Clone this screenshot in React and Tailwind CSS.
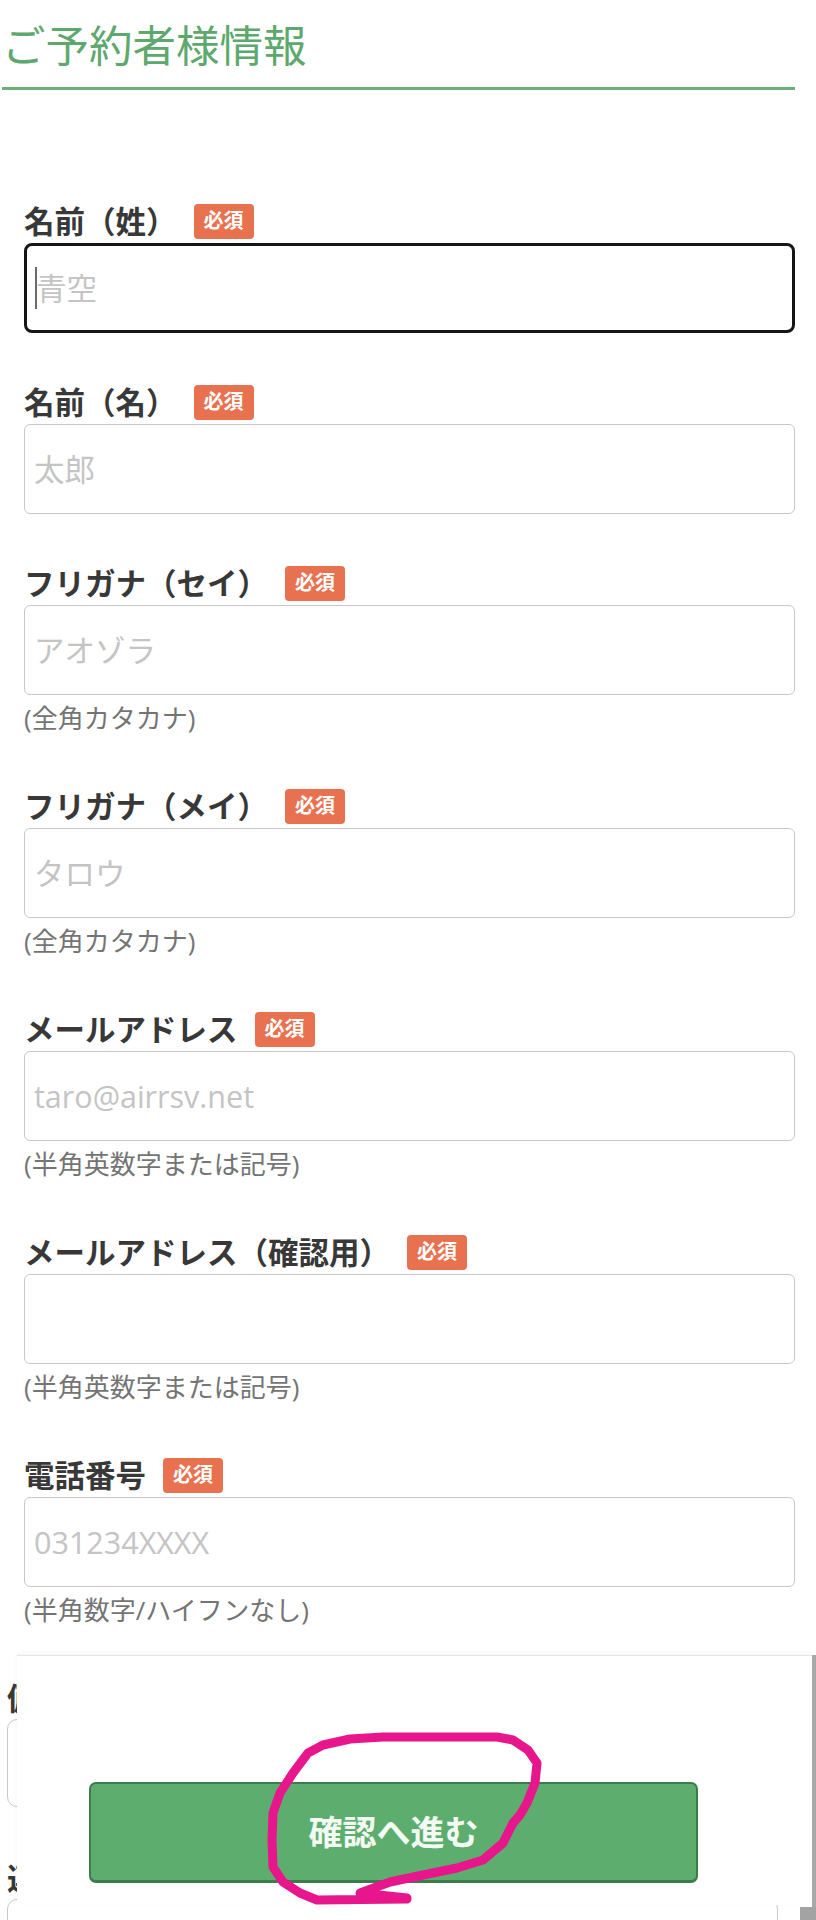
import React from "react";

const FIELDS = [
  { label: "名前（姓）", placeholder: "青空", focused: true },
  { label: "名前（名）", placeholder: "太郎" },
  { label: "フリガナ（セイ）", placeholder: "アオゾラ", help: "(全角カタカナ)" },
  { label: "フリガナ（メイ）", placeholder: "タロウ", help: "(全角カタカナ)" },
  { label: "メールアドレス", placeholder: "taro@airrsv.net", help: "(半角英数字または記号)" },
  { label: "メールアドレス（確認用）", placeholder: "", help: "(半角英数字または記号)" },
  { label: "電話番号", placeholder: "031234XXXX", help: "(半角数字/ハイフンなし)" },
];

// hand-drawn marker loop around the submit label
const LOOP = [
  [407, 1898], [360, 1893], [390, 1882], [423, 1875], [457, 1868], [483, 1860],
  [503, 1843], [513, 1823], [520, 1815], [527, 1803], [535, 1783], [537, 1763],
  [528, 1750], [513, 1740], [497, 1737], [383, 1737], [350, 1739], [323, 1745],
  [308, 1753], [293, 1773], [280, 1793], [273, 1813], [272, 1840], [273, 1867],
  [283, 1882], [300, 1893], [317, 1900], [407, 1899],
];

function Field({ label, placeholder, help, focused }) {
  return (
    <div className={help ? "mb-[50px]" : "mb-[51px]"}>
      <div className="flex h-[36px] items-center">
        <span className="text-[30.5px] font-bold leading-none text-[#383838]">{label}</span>
        <span className="ml-[17px] flex h-[35px] w-[60px] items-center justify-center rounded-[4px] bg-[#e8714f] text-[20px] font-bold leading-none text-white">
          必須
        </span>
      </div>
      <div className="relative mt-[4px]">
        <input
          type="text"
          placeholder={placeholder}
          className={
            focused
              ? "h-[90px] w-full rounded-[8px] border-[3px] border-[#161616] bg-white pl-[9px] text-[30.5px] text-[#333] outline-none placeholder:text-[#c4c4c4]"
              : "h-[90px] w-full rounded-[6px] border border-[#c8c8c8] bg-white pl-[9px] text-[30.5px] text-[#333] outline-none placeholder:text-[#c4c4c4]"
          }
        />
        {focused && <span className="absolute left-[11px] top-[24px] h-[42px] w-[2px] bg-[#6b6b6b]" />}
      </div>
      {help && <p className="h-[43px] pt-[5px] text-[26px] leading-[36px] text-[#747474]">{help}</p>}
    </div>
  );
}

export default function App() {
  const d = LOOP.map(([x, y], i) => `${i ? "L" : "M"}${x} ${y}`).join(" ");

  return (
    <div className="relative h-[1920px] w-[816px] overflow-hidden bg-white font-['Open_Sans','Noto_Sans_CJK_JP',sans-serif]">
      {/* section title */}
      <div className="ml-[2px] w-[793px] border-b-[3px] border-[#68b279] pb-[13px] pt-[17px]">
        <h1 className="text-[43.5px] font-normal leading-[57px] text-[#5da86c]">ご予約者様情報</h1>
      </div>

      <form className="pl-[24px] pr-[21px] pt-[113px]">
        {FIELDS.map((f) => (
          <Field key={f.label} {...f} />
        ))}
      </form>

      {/* rest of the form, hidden under the footer sheet */}
      <div className="ml-[7px] mr-[38px] mt-[8px]">
        <div className="flex h-[36px] items-center">
          <span className="text-[30.5px] font-bold leading-none text-[#383838]">備考</span>
        </div>
        <div className="mt-[3px] h-[88px] rounded-[10px] border border-[#c8c8c8]" />
        <div className="mt-[53px] flex h-[36px] items-center">
          <span className="text-[30.5px] font-bold leading-none text-[#383838]">連絡事項</span>
        </div>
        <div className="mt-[3px] h-[60px] rounded-t-[10px] border border-[#c8c8c8]" />
      </div>

      {/* footer sheet */}
      <div className="absolute left-[17px] top-[1655px] h-[250px] w-[795px] border-t border-[#e6e6e6] bg-white shadow-[0_-2px_6px_rgba(0,0,0,0.04)]">
        <button
          type="button"
          className="ml-[72px] mt-[126px] flex h-[101px] w-[609px] items-center justify-center rounded-[7px] border-2 border-b-[3px] border-[#3e7b4b] bg-[#5dae6e] text-[34px] font-bold text-[#f3faf3]"
        >
          確認へ進む
        </button>
      </div>
      <div className="absolute left-[812px] top-[1655px] h-[252px] w-[4px] bg-[#a8a8a8]" />
      <div className="absolute left-[800px] top-[1907px] h-[13px] w-[16px] bg-[#a3a3a3]" />

      {/* marker annotation */}
      <svg
        className="absolute left-[260px] top-[1725px]"
        width="290"
        height="190"
        viewBox="260 1725 290 190"
        fill="none"
      >
        <path d={d} stroke="#e8168c" strokeWidth="9" strokeLinecap="round" strokeLinejoin="round" />
      </svg>
    </div>
  );
}
